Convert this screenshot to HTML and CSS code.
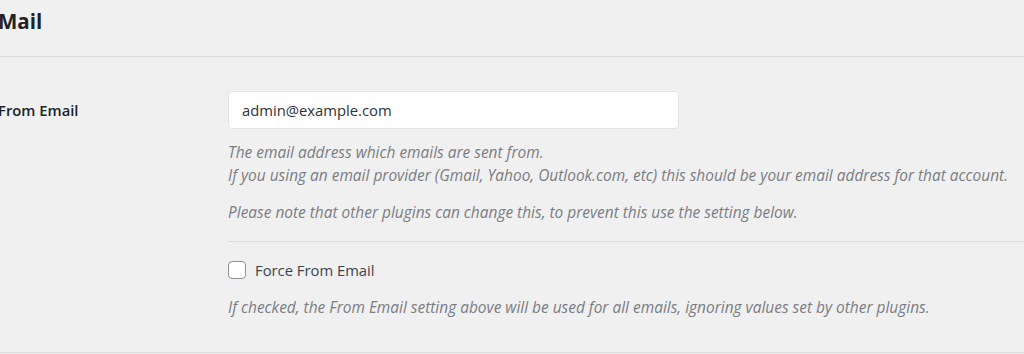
FILE: index.html
```html
<!DOCTYPE html>
<html lang="en">
<head>
    <meta charset="UTF-8">
    <title>Mail</title>
    <link rel="stylesheet" href="styles.css">
</head>
<body>
    <div class="wrap">
        <h1 class="page-title">Mail</h1>

        <div class="settings">
            <div class="field-row">
                <label class="field-label" for="from-email">From Email</label>
                <div class="field-body">
                    <input type="text" id="from-email" class="text-input" value="admin@example.com">
                    <p class="description">The email address which emails are sent from.<br>
                        If you using an email provider (Gmail, Yahoo, Outlook.com, etc) this should be your email address for that account.</p>
                    <p class="description">Please note that other plugins can change this, to prevent this use the setting below.</p>

                    <div class="field-sep"></div>

                    <label class="check-label">
                        <input type="checkbox" class="check">
                        <span>Force From Email</span>
                    </label>
                    <p class="description">If checked, the From Email setting above will be used for all emails, ignoring values set by other plugins.</p>
                </div>
            </div>
        </div>
    </div>
</body>
</html>
```

FILE: styles.css
```css
body {
    margin: 0;
    background-color: #f0f0f1;
    font-family: 'Open Sans', sans-serif;
    font-size: 14.8px;
    color: #3c434a;
}

.wrap {
    margin-left: -2px;
}

.page-title {
    margin: 0;
    padding: 6px 0 0 0;
    height: 50px;
    font-size: 20.5px;
    font-weight: 700;
    color: #1d2327;
    line-height: 30px;
    border-bottom: 1px solid #dcdcde;
}

.settings {
    border-bottom: 1px solid #dcdcde;
    padding: 34px 0 33px 0;
}

.field-row {
    display: grid;
    grid-template-columns: 230px 1fr;
}

.field-label {
    font-weight: 600;
    color: #1d2327;
    padding-top: 10px;
    line-height: 18px;
}

.text-input {
    width: 451px;
    height: 38px;
    box-sizing: border-box;
    padding: 0 13px;
    font-family: inherit;
    font-size: 14.8px;
    color: #2c3338;
    background: #fff;
    border: 1px solid #e4e4e6;
    border-radius: 4px;
}

.description {
    margin: 0;
    font-style: italic;
    font-size: 15.45px;
    color: #7a7d82;
    line-height: 23px;
}

.text-input + .description {
    margin-top: 12px;
}

.description + .description {
    margin-top: 14px;
}

.field-sep {
    border-top: 1px solid #dcdcde;
    margin: 17px 0 18px 0;
}

.check-label {
    display: flex;
    align-items: center;
    gap: 9px;
    color: #3c434a;
    line-height: 20px;
    margin-bottom: 16px;
}

.check {
    appearance: none;
    margin: 0;
    width: 18px;
    height: 18px;
    border: 1px solid #8c8f94;
    border-radius: 4px;
    background: #fff;
}
```
